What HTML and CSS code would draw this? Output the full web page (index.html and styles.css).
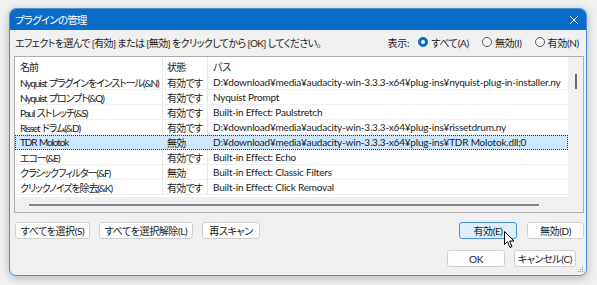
FILE: index.html
```html
<!DOCTYPE html>
<html>
<head>
    <meta charset="UTF-8">
    <title>プラグインの管理</title>
    <link rel="stylesheet" href="styles.css">
</head>
<body>
    <div class="window">
        <div class="titlebar">
            <span class="title">プラグインの管理</span>
            <svg class="close" width="10" height="10" viewBox="0 0 10 10">
                <path d="M1 1 L9 9 M9 1 L1 9" stroke="#fff" stroke-width="1" fill="none"/>
            </svg>
        </div>

        <div class="content">
            <div class="topline">
                <span class="hint">エフェクトを選んで [有効] または [無効] をクリックしてから [OK] してください。</span>
                <div class="filter">
                    <span class="filter-label">表示:</span>
                    <label class="radio"><span class="dot checked"></span>すべて(A)</label>
                    <label class="radio"><span class="dot"></span>無効(I)</label>
                    <label class="radio"><span class="dot"></span>有効(N)</label>
                </div>
            </div>

            <div class="list">
                <div class="list-main">
                    <div class="rows">
                        <div class="row header">
                            <div class="cell c-name">名前</div>
                            <div class="cell c-state">状態</div>
                            <div class="cell c-path">パス</div>
                        </div>
                        <div class="row">
                            <div class="cell c-name">Nyquist プラグインをインストール(&amp;N)</div>
                            <div class="cell c-state">有効です</div>
                            <div class="cell c-path">D:¥download¥media¥audacity-win-3.3.3-x64¥plug-ins¥nyquist-plug-in-installer.ny</div>
                        </div>
                        <div class="row">
                            <div class="cell c-name">Nyquist プロンプト(&amp;Q)</div>
                            <div class="cell c-state">有効です</div>
                            <div class="cell c-path">Nyquist Prompt</div>
                        </div>
                        <div class="row">
                            <div class="cell c-name">Paul ストレッチ(&amp;S)</div>
                            <div class="cell c-state">有効です</div>
                            <div class="cell c-path">Built-in Effect: Paulstretch</div>
                        </div>
                        <div class="row">
                            <div class="cell c-name">Risset ドラム(&amp;D)</div>
                            <div class="cell c-state">有効です</div>
                            <div class="cell c-path">D:¥download¥media¥audacity-win-3.3.3-x64¥plug-ins¥rissetdrum.ny</div>
                        </div>
                        <div class="row selected">
                            <div class="cell c-name">TDR Molotok</div>
                            <div class="cell c-state">無効</div>
                            <div class="cell c-path">D:¥download¥media¥audacity-win-3.3.3-x64¥plug-ins¥TDR Molotok.dll;0</div>
                        </div>
                        <div class="row">
                            <div class="cell c-name">エコー(&amp;E)</div>
                            <div class="cell c-state">有効です</div>
                            <div class="cell c-path">Built-in Effect: Echo</div>
                        </div>
                        <div class="row">
                            <div class="cell c-name">クラシックフィルター(&amp;F)</div>
                            <div class="cell c-state">無効</div>
                            <div class="cell c-path">Built-in Effect: Classic Filters</div>
                        </div>
                        <div class="row">
                            <div class="cell c-name">クリックノイズを除去(&amp;K)</div>
                            <div class="cell c-state">有効です</div>
                            <div class="cell c-path">Built-in Effect: Click Removal</div>
                        </div>
                    </div>
                    <div class="vscroll"><span class="vthumb"></span></div>
                </div>
                <div class="hscroll"><span class="hthumb"></span></div>
            </div>

            <div class="btn-row">
                <button class="btn w-all">すべてを選択(S)</button>
                <button class="btn w-none">すべてを選択解除(L)</button>
                <button class="btn w-rescan">再スキャン</button>
                <button class="btn focus w-enable">有効(E)</button>
                <button class="btn w-disable">無効(D)</button>
            </div>

            <div class="btn-row end">
                <button class="btn w-ok">OK</button>
                <button class="btn w-cancel">キャンセル(C)</button>
            </div>
        </div>

        <svg class="grip" width="7" height="7" viewBox="0 0 7 7">
            <rect x="5" y="1" width="1" height="1" fill="#999"/>
            <rect x="3" y="3" width="1" height="1" fill="#999"/>
            <rect x="5" y="3" width="1" height="1" fill="#999"/>
            <rect x="1" y="5" width="1" height="1" fill="#999"/>
            <rect x="3" y="5" width="1" height="1" fill="#999"/>
            <rect x="5" y="5" width="1" height="1" fill="#999"/>
        </svg>
    </div>

    <!-- マウスカーソル -->
    <svg class="cursor" width="12" height="18" viewBox="0 0 12 18">
        <path d="M0.5 0.5 L0.5 13.5 L3.5 10.5 L6 16.5 L8 15.6 L5.6 10 L10 10 Z" fill="#fff" stroke="#000" stroke-width="1" stroke-linejoin="round"/>
    </svg>
</body>
</html>
```

FILE: styles.css
```css
body {
    margin: 0;
    width: 597px;
    height: 285px;
    background-color: #f0f0f0;
    font-family: Lato, "Noto Sans CJK JP", sans-serif;
    font-size: 10px;
    font-feature-settings: "palt";
    color: #1a1a1a;
    position: relative;
    overflow: hidden;
}

.window {
    position: absolute;
    left: 9px;
    top: 8px;
    width: 576px;
    height: 266px;
    border: 1px solid #4d8fd4;
    border-radius: 7px;
    background-color: #f0f0f0;
    box-shadow: 0 2px 10px rgba(0, 0, 0, 0.25);
    overflow: hidden;
}

.titlebar {
    height: 21px;
    background-color: #0a6bc9;
    color: #fff;
    display: flex;
    align-items: center;
    justify-content: space-between;
    padding: 0 7px 0 5px;
    font-size: 10.5px;
}

.title {
    letter-spacing: -0.8px;
}

.close {
    display: block;
}

.content {
    padding: 0 2px 0 4px;
}

.topline {
    height: 18px;
    margin-top: 3px;
    display: flex;
    align-items: center;
    justify-content: space-between;
    padding-left: 1px;
}

.hint {
    letter-spacing: -0.6px;
}

.filter {
    display: flex;
    align-items: center;
    padding-right: 5px;
    letter-spacing: -0.3px;
}

.filter-label {
    margin-right: 9px;
}

.radio {
    display: flex;
    align-items: center;
    margin-left: 13px;
}

.radio:first-of-type {
    margin-left: 0;
}

.dot {
    width: 8px;
    height: 8px;
    border: 1px solid #5a5a5a;
    border-radius: 50%;
    margin-right: 3px;
    background-color: #f8f8f8;
}

.dot.checked {
    width: 4px;
    height: 4px;
    border: 3px solid #0a6bc9;
    background-color: #fff;
}

.list {
    margin-top: 5px;
    height: 155px;
    border: 1px solid #adadad;
    background-color: #f0f0f0;
    display: flex;
    flex-direction: column;
}

.list-main {
    display: flex;
    flex: 1;
    background-color: #fff;
}

.rows {
    flex: 1;
    overflow: hidden;
}

.row {
    display: flex;
    height: 15px;
    border-bottom: 1px solid #efefef;
    box-sizing: border-box;
    align-items: center;
    white-space: nowrap;
}

.row.header {
    height: 18px;
    border-bottom: none;
}

.row.selected {
    background-color: #cce8ff;
    outline: 1px dotted #333;
    outline-offset: -1px;
}

.cell {
    height: 100%;
    display: flex;
    align-items: center;
    box-sizing: border-box;
    overflow: hidden;
}

.c-name {
    width: 148px;
    padding-left: 5px;
    border-right: 1px solid #e5e5e5;
    letter-spacing: -1.1px;
    word-spacing: 1px;
}

.c-state {
    width: 45px;
    padding-left: 4px;
    border-right: 1px solid #e5e5e5;
    letter-spacing: -0.7px;
}

.c-path {
    flex: 1;
    padding-left: 5px;
    letter-spacing: -0.2px;
}

.vscroll {
    width: 15px;
    background-color: #f0f0f0;
    position: relative;
}

.vthumb {
    position: absolute;
    left: 7px;
    top: 17px;
    width: 2px;
    height: 15px;
    background-color: #6a6a6a;
}

.hscroll {
    height: 15px;
    position: relative;
}

.hthumb {
    position: absolute;
    left: 14px;
    top: 7px;
    width: 510px;
    height: 2px;
    background-color: #858585;
}

.btn-row {
    display: flex;
    margin-top: 9px;
    padding-left: 1px;
}

.btn-row.end {
    justify-content: flex-end;
    margin-top: 11px;
    padding-right: 8px;
}

.btn {
    height: 17px;
    padding: 0;
    border: 1px solid #d0d0d0;
    border-radius: 3px;
    background-color: #fdfdfd;
    font-family: inherit;
    font-size: 10px;
    font-feature-settings: "palt";
    letter-spacing: -0.4px;
    color: #1a1a1a;
    margin-right: 9px;
}

.btn:last-child {
    margin-right: 0;
}

.btn.focus {
    background-color: #e0eef9;
    border-color: #4a90d9;
}

.w-all { width: 75px; }
.w-none { width: 94px; }
.w-rescan { width: 58px; }
.w-enable { width: 58px; margin-left: auto; margin-right: 10px; }
.w-disable { width: 57px; }
.w-ok { width: 58px; }
.w-cancel { width: 62px; }

.grip {
    position: absolute;
    right: 2px;
    bottom: 2px;
}

.cursor {
    position: absolute;
    left: 504px;
    top: 231px;
}
```
